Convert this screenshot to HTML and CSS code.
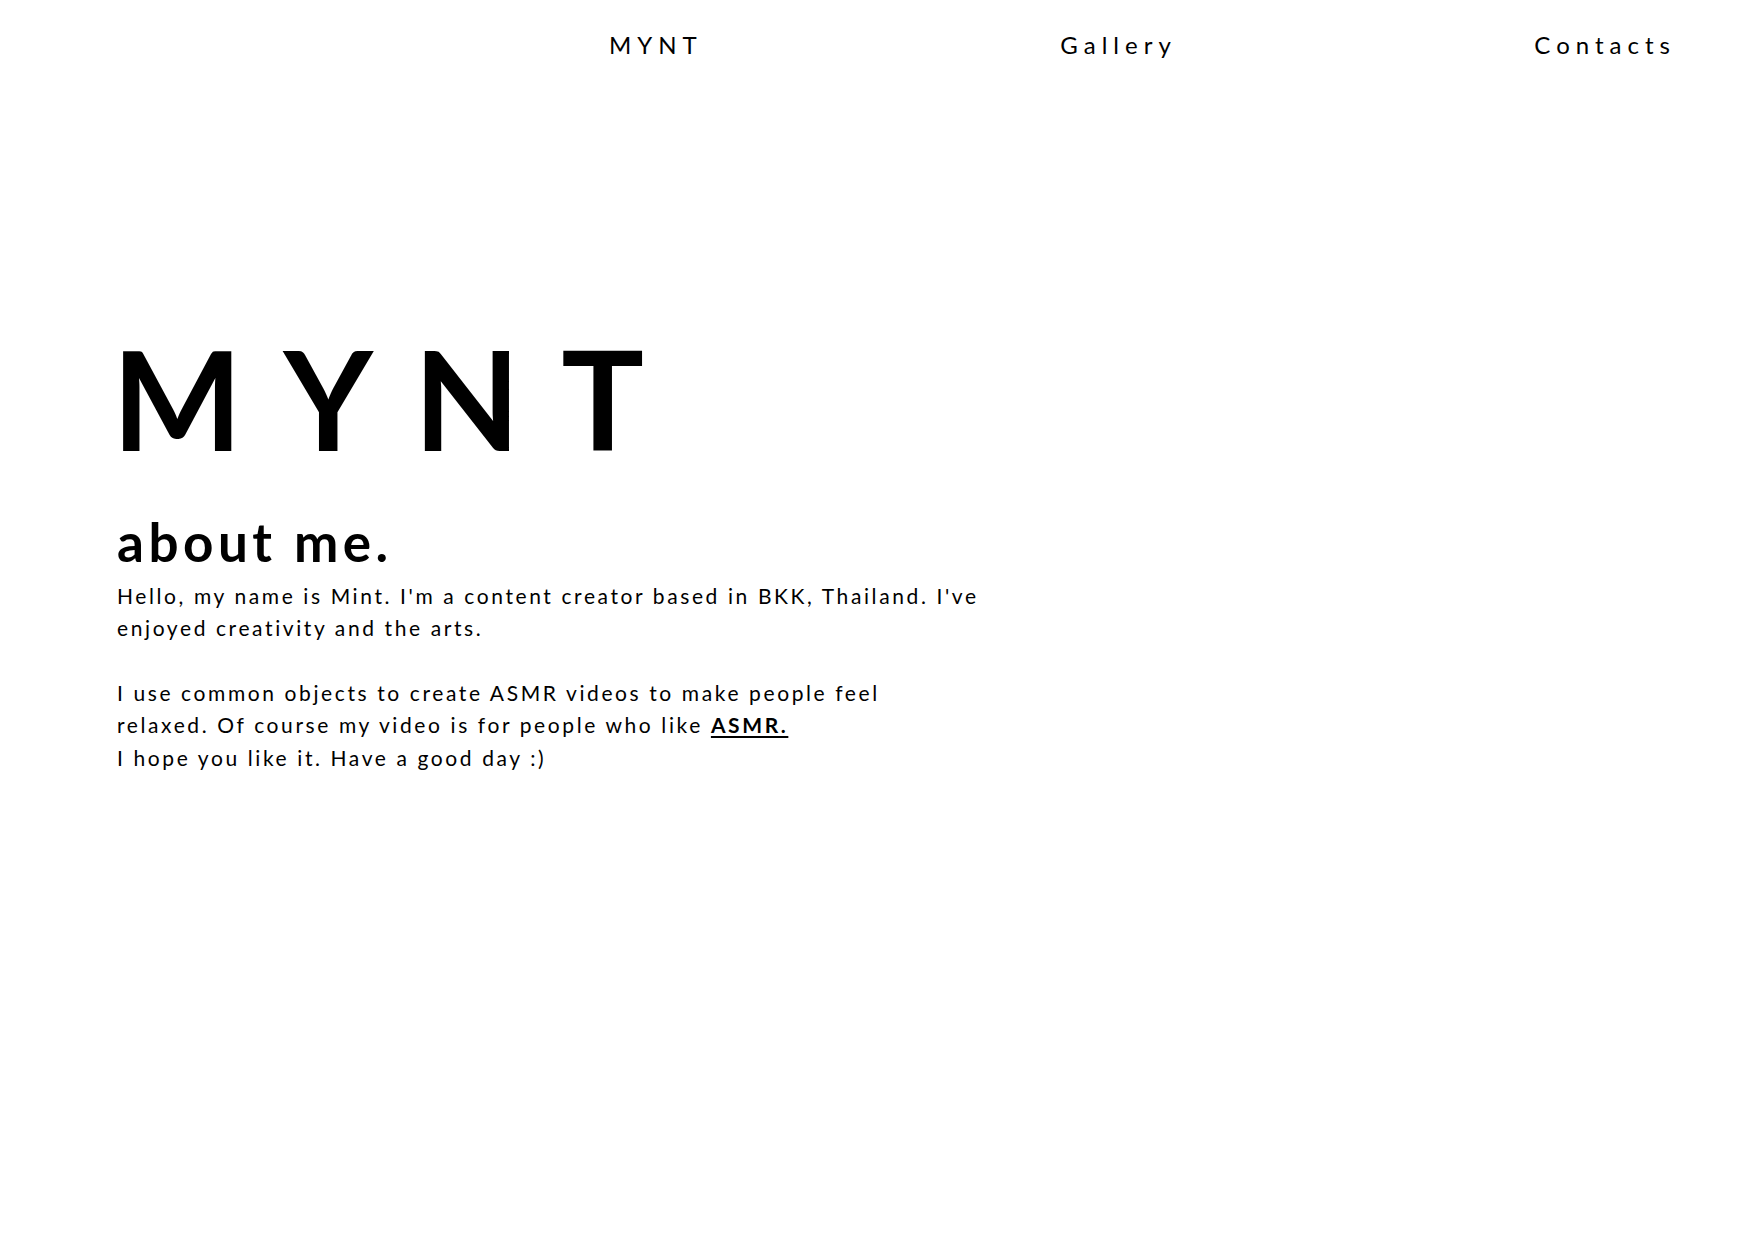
FILE: index.html
```html
<!DOCTYPE html>
<html lang="en">
<head>
<meta charset="utf-8">
<title>MYNT</title>
<link rel="stylesheet" href="styles.css">
</head>
<body>
<header class="nav">
  <a class="nav-link" href="#">MYNT</a>
  <a class="nav-link" href="#">Gallery</a>
  <a class="nav-link" href="#">Contacts</a>
</header>
<main class="hero">
  <h1 class="logo">MYNT</h1>
  <h2 class="about">about me.</h2>
  <div class="bio">
    <p class="para">Hello, my name is Mint. I'm a content creator based in BKK, Thailand. I've enjoyed creativity and the arts.</p>
    <p class="para">I use common objects to create ASMR videos to make people feel<br>relaxed. Of course my video is for people who like <a class="strong-link" href="#">ASMR.</a><br>I hope you like it. Have a good day :)</p>
  </div>
</main>
</body>
</html>
```
FILE: styles.css
```css
html, body {
  margin: 0;
  padding: 0;
  background: #ffffff;
  color: #000000;
  font-family: "Lato", "Noto Sans", sans-serif;
}

.nav {
  display: flex;
  justify-content: space-between;
  padding: 31px 84px 0 609px;
}

.nav-link {
  font-size: 24px;
  line-height: 1.2;
  letter-spacing: 6px;
  color: #000;
  text-decoration: none;
}

.hero {
  padding: 269px 0 0 117px;
}

.logo {
  margin: 0 0 0 -5px;
  font-size: 138px;
  line-height: 1;
  font-weight: 700;
  letter-spacing: 41px;
}

.about {
  margin: 48px 0 0 0;
  font-size: 53px;
  line-height: 1;
  font-weight: 700;
  letter-spacing: 4.5px;
}

.bio {
  width: 875px;
  margin-top: 12px;
}

.para {
  margin: 0 0 32px 0;
  font-size: 21px;
  line-height: 32.5px;
  letter-spacing: 2.6px;
}

.strong-link {
  color: #000;
  font-weight: 700;
  text-decoration: underline;
  text-decoration-thickness: 2px;
  text-underline-offset: 3px;
}
```
